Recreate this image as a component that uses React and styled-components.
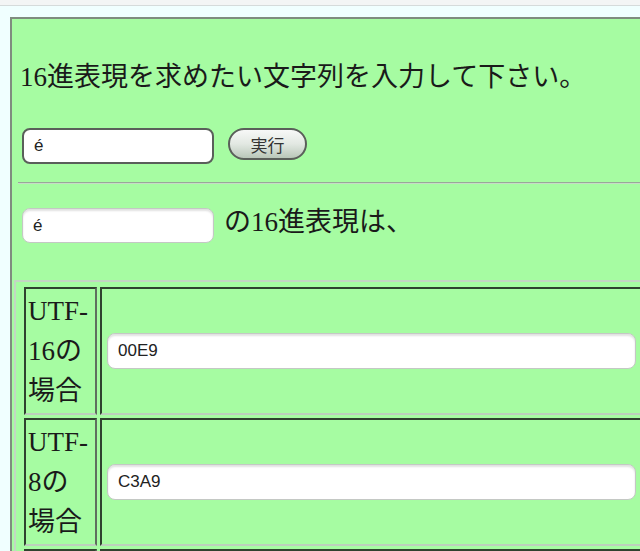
import React from "react";
import styled, { createGlobalStyle } from "styled-components";

const GlobalStyle = createGlobalStyle`
  html, body {
    margin: 0;
    padding: 0;
    overflow: hidden;
    background: #f0ffff;
  }
  body {
    font-family: "Liberation Serif", "Noto Sans CJK JP", serif;
    color: #1a1a1a;
  }
`;

// 上端の細いバー
const TopBar = styled.div`
  height: 5px;
  background: #f3f5f5;
  border-bottom: 1px solid #d5dbdb;
`;

// 緑のパネル（右側は画面外へ）
const Panel = styled.div`
  margin: 11px 0 0 10px;
  width: 720px;
  min-height: 600px;
  background: #a6fca2;
  border-top: 2px solid #7f8c7f;
  border-left: 2px solid #7f8c7f;
`;

const Prompt = styled.p`
  margin: 38px 0 0 8px;
  font-size: 27px;
  line-height: 40px;
`;

const Row = styled.div`
  display: flex;
  align-items: flex-start;
  gap: ${(p) => p.$gap || 14}px;
  margin: ${(p) => p.$top}px 0 0 10px;
`;

const TextField = styled.input`
  box-sizing: border-box;
  width: ${(p) => p.$width}px;
  height: ${(p) => p.$height || 36}px;
  padding: 0 10px;
  border-radius: 8px;
  background: #fff;
  font-family: "Liberation Sans", "Noto Sans CJK JP", sans-serif;
  font-size: 17px;
  color: #222;
  outline: none;
  border: ${(p) => (p.$dark ? "2px solid #5a5f5a" : "1px solid #c4c8c4")};
  box-shadow: ${(p) =>
    p.$dark ? "none" : "inset 0 2px 2px rgba(0, 0, 0, 0.12)"};
`;

const RunButton = styled.button`
  box-sizing: border-box;
  width: 79px;
  height: 32px;
  border-radius: 16px;
  border: 2px solid #5a5f5a;
  background: linear-gradient(#f7f8f7, #e2e8e2 50%, #b9c7b9);
  font-family: "Liberation Sans", "Noto Sans CJK JP", sans-serif;
  font-size: 17px;
  color: #333;
  padding: 0;
`;

const Divider = styled.hr`
  margin: 18px 0 0 6px;
  border: 0;
  border-top: 1px solid #99a899;
  border-bottom: 1px solid #c6dcc6;
  height: 0;
`;

const Caption = styled.span`
  margin-top: -6px;
  font-size: 27px;
  line-height: 40px;
`;

const ResultTable = styled.table`
  margin: 37px 0 0 2px;
  border: 2px solid #c3d6c3;
  border-spacing: 3px;
  padding: 2px 5px;
  width: 700px;
`;

const LabelCell = styled.td`
  width: 65px;
  padding: 2px;
  font-size: 27px;
  line-height: 40px;
  vertical-align: top;
  border-top: 2px solid #2f422f;
  border-left: 2px solid #2f422f;
  border-right: 2px solid #5f6f5f;
  border-bottom: 2px solid #bccfbc;
`;

const ValueCell = styled.td`
  padding: 2px 5px;
  vertical-align: middle;
  border-top: 2px solid #2f422f;
  border-left: 2px solid #2f422f;
  border-right: 2px solid #5f6f5f;
  border-bottom: 2px solid #bccfbc;
`;

const results = [
  { head: "UTF-", mid: "16の", value: "00E9" },
  { head: "UTF-", mid: "8の", value: "C3A9" },
  { head: "UTF-", mid: "32の", value: "000000E9" },
];

export default function App() {
  return (
    <>
      <GlobalStyle />
      <TopBar />
      <Panel>
        <Prompt>16進表現を求めたい文字列を入力して下さい。</Prompt>
        <Row $top={31}>
          <TextField $width={192} $dark defaultValue="é" />
          <RunButton>実行</RunButton>
        </Row>
        <Divider />
        <Row $top={24} $gap={10}>
          <TextField $width={192} $height={35} defaultValue="é" readOnly />
          <Caption>の16進表現は、</Caption>
        </Row>
        <ResultTable>
          <tbody>
            {results.map((r) => (
              <tr key={r.mid}>
                <LabelCell>
                  {r.head}
                  <br />
                  {r.mid}
                  <br />
                  場合
                </LabelCell>
                <ValueCell>
                  <TextField $width={529} defaultValue={r.value} readOnly />
                </ValueCell>
              </tr>
            ))}
          </tbody>
        </ResultTable>
      </Panel>
    </>
  );
}
